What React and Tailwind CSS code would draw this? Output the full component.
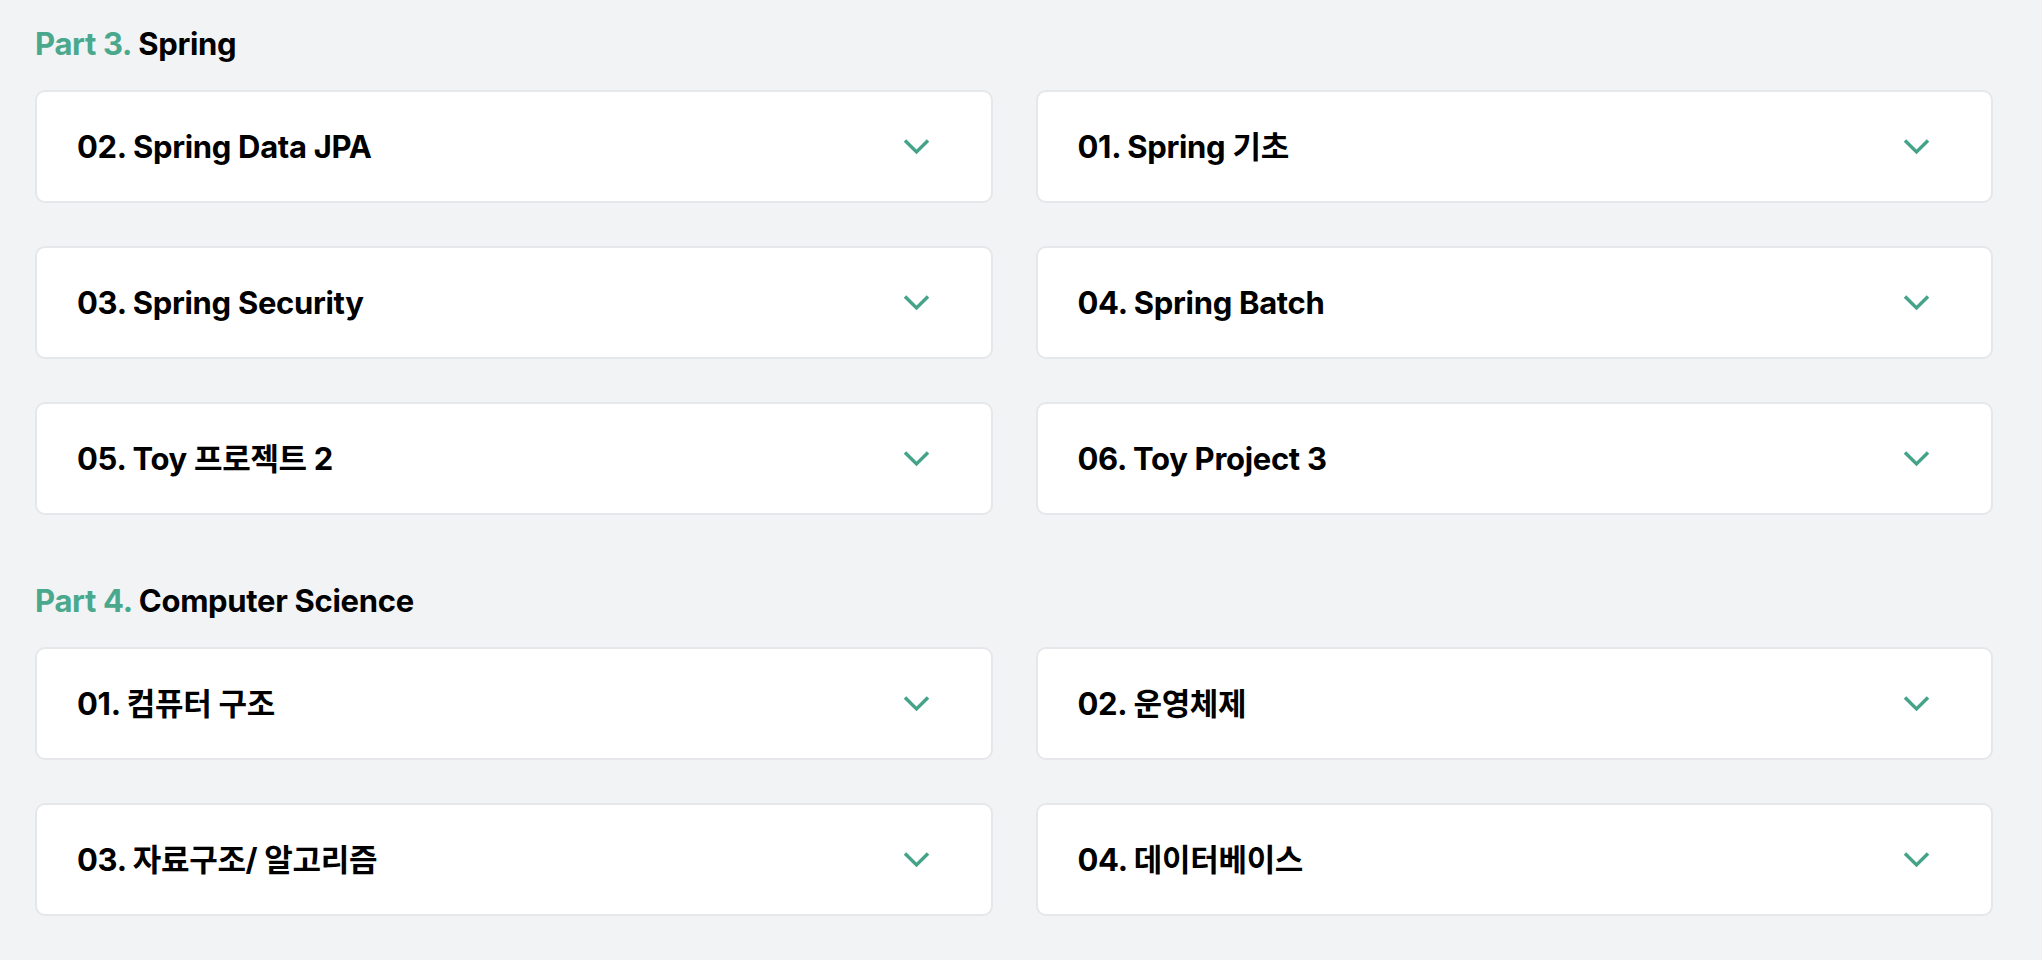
import React from 'react';

const sections = [
  {
    part: 'Part 3.',
    title: 'Spring',
    items: [
      '02. Spring Data JPA',
      '01. Spring 기초',
      '03. Spring Security',
      '04. Spring Batch',
      '05. Toy 프로젝트 2',
      '06. Toy Project 3',
    ],
  },
  {
    part: 'Part 4.',
    title: 'Computer Science',
    items: ['01. 컴퓨터 구조', '02. 운영체제', '03. 자료구조/ 알고리즘', '04. 데이터베이스'],
  },
];

function Chevron() {
  return (
    <svg width="27" height="17" viewBox="0 0 27 17" fill="none" className="shrink-0">
      <polyline points="2,2.4 13.5,13.9 25,2.4" stroke="#45a389" strokeWidth="3.5" />
    </svg>
  );
}

function CourseCard({ title }) {
  return (
    <div className="h-[113px] flex items-center justify-between pl-[40px] pr-[61px] bg-white border-2 border-[#e6e7eb] rounded-[10px] cursor-pointer">
      <span className="text-[31px] leading-[40px] font-bold text-black tracking-[-0.01em]">{title}</span>
      <Chevron />
    </div>
  );
}

export default function App() {
  return (
    <div
      className="min-h-screen bg-[#f2f3f5] pl-[35px] pr-[49px] pt-[24px] pb-[40px]"
      style={{ fontFamily: 'Inter, "Noto Sans CJK KR", sans-serif' }}
    >
      {sections.map((section, i) => (
        <section key={section.part} className={i > 0 ? 'mt-[66px]' : ''}>
          <h2 className="text-[31px] leading-[40px] font-bold tracking-[-0.01em] mb-[26px]">
            <span className="text-[#4aa88d]">{section.part}</span>{' '}
            <span className="text-black">{section.title}</span>
          </h2>
          <div className="grid grid-cols-2 gap-x-[43px] gap-y-[43px]">
            {section.items.map((item) => (
              <CourseCard key={item} title={item} />
            ))}
          </div>
        </section>
      ))}
    </div>
  );
}
